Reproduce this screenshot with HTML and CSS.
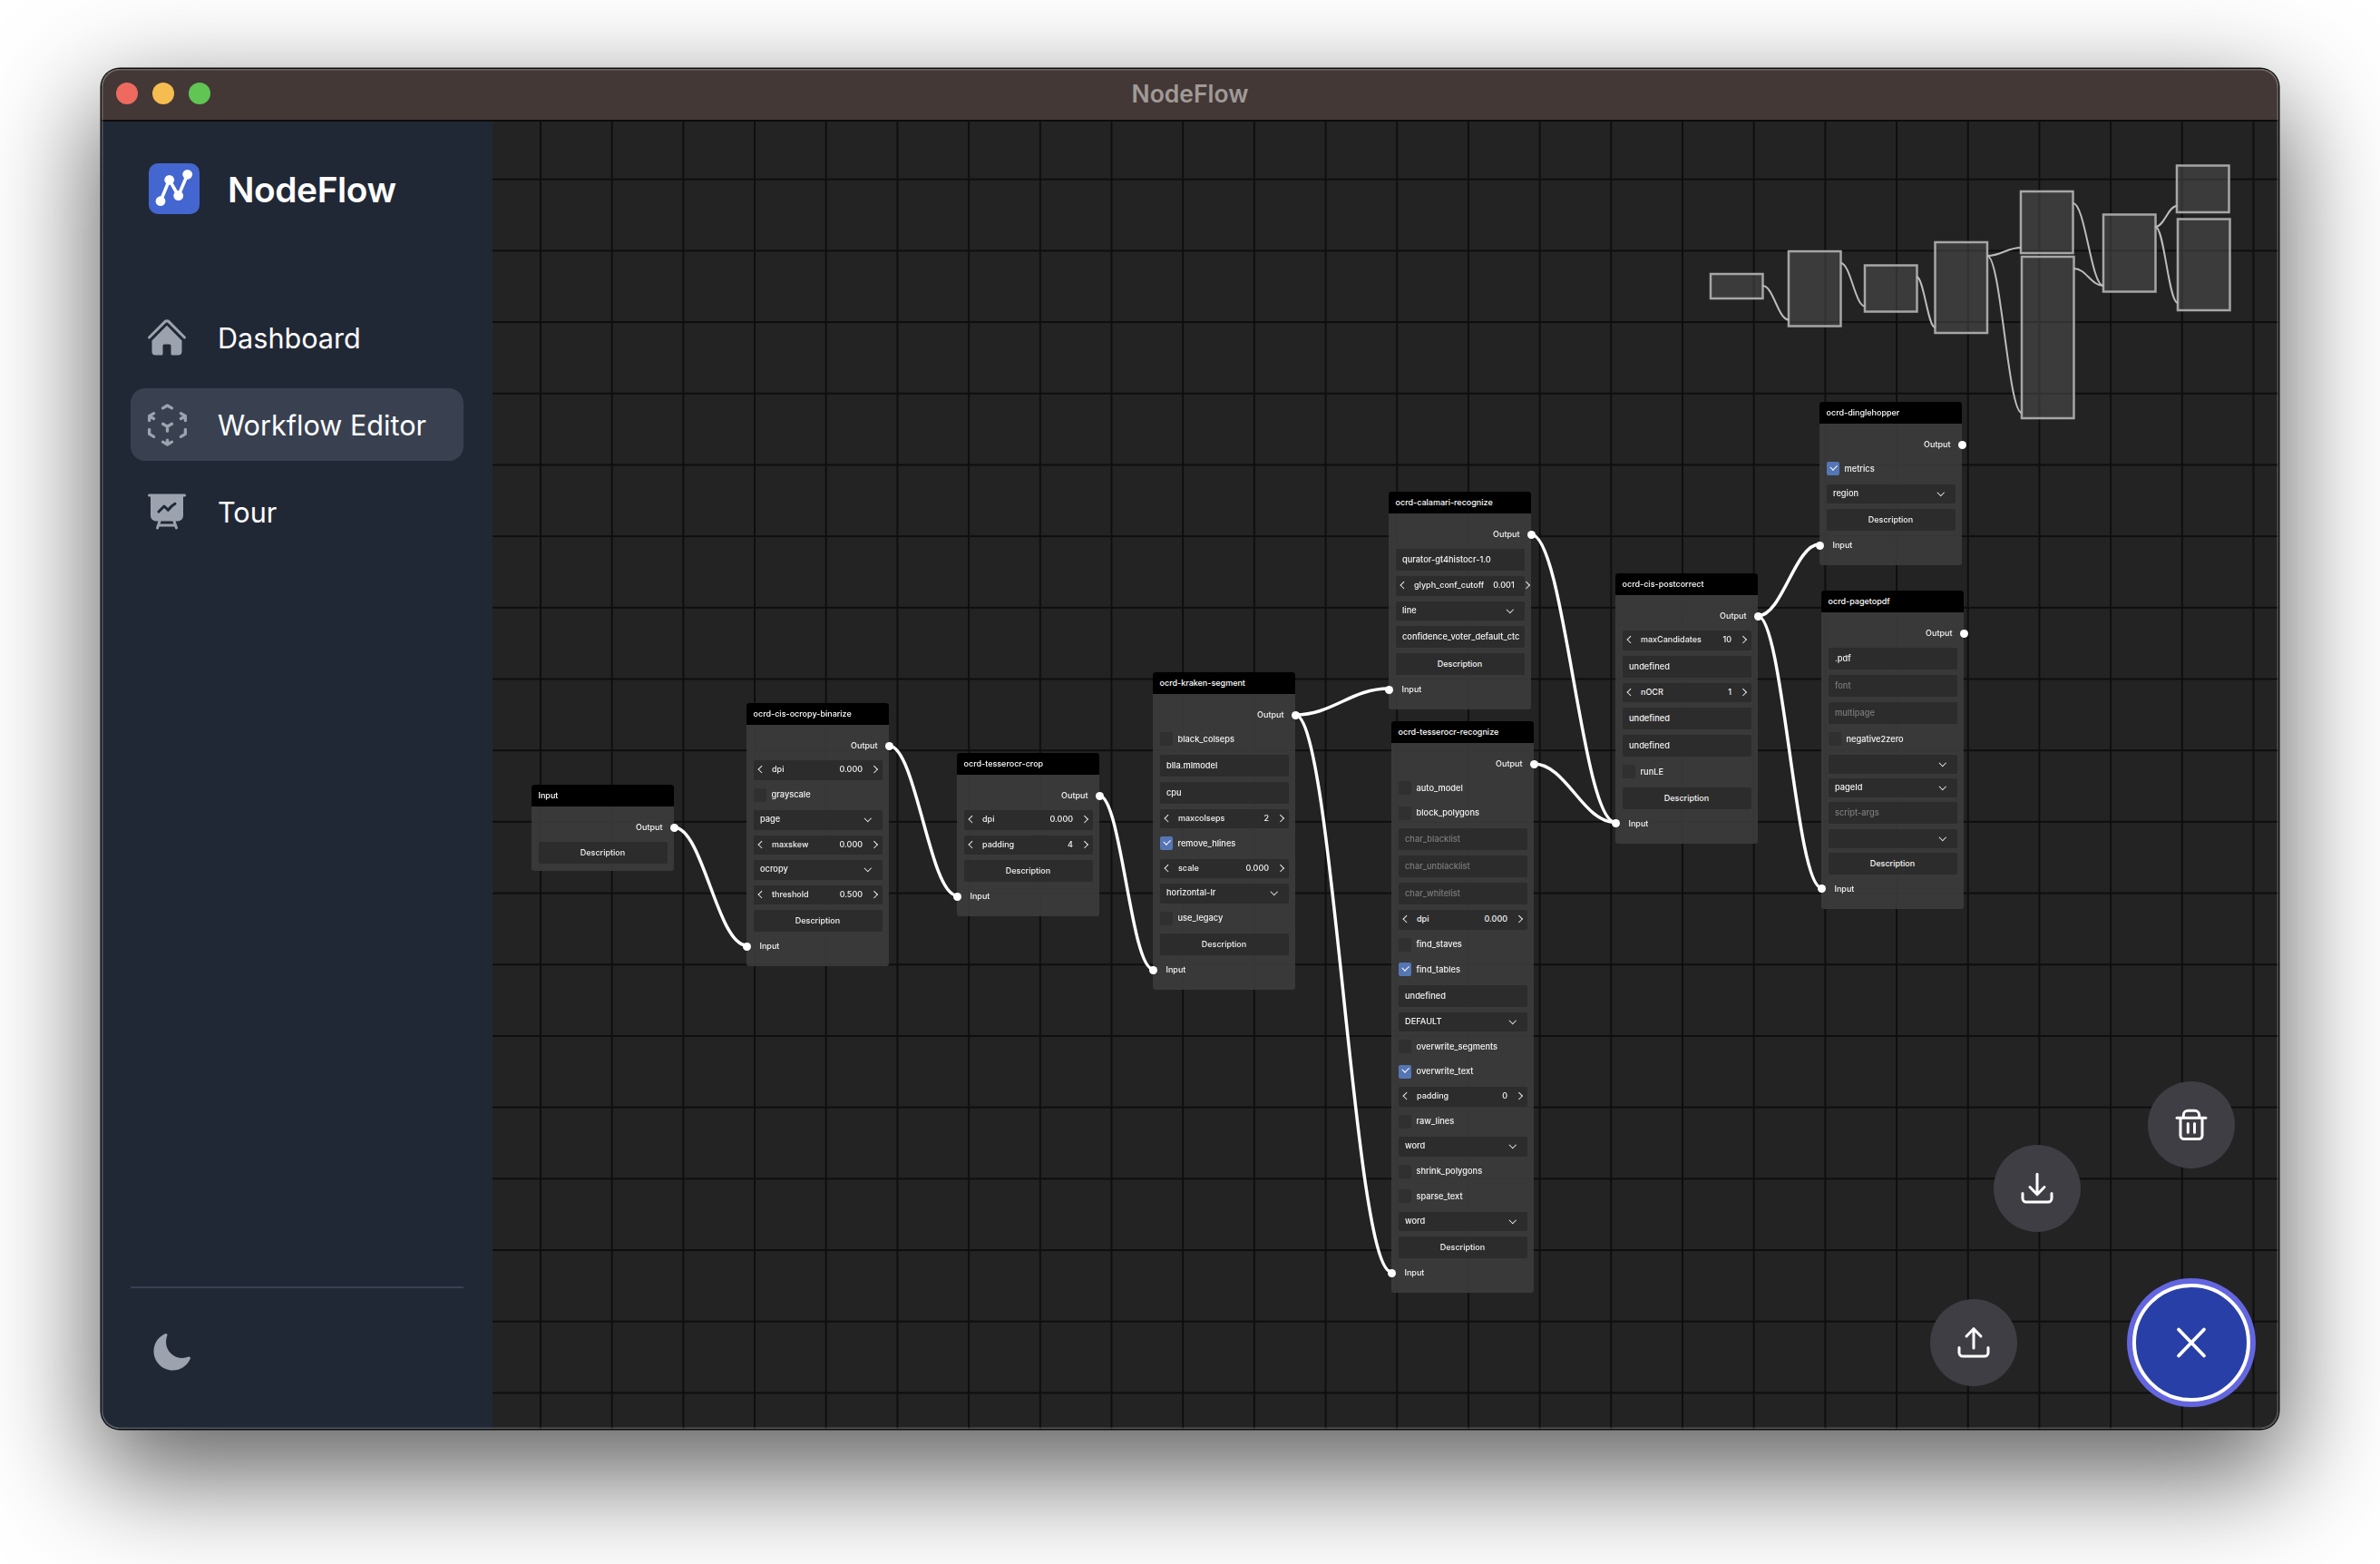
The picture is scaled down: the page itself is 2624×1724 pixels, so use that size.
FILE: index.html
```html
<!DOCTYPE html>
<html lang="en">
<head>
<meta charset="utf-8">
<title>NodeFlow</title>
<link rel="stylesheet" href="styles.css">
</head>
<body>
<div class="window">
  <header class="titlebar">
    <div class="lights"><i class="light red"></i><i class="light yellow"></i><i class="light green"></i></div>
    <div class="wintitle">NodeFlow</div>
    <div></div>
  </header>
  <div class="app">
    <aside class="sidebar">
      <div class="brand">
        <svg class="logo" viewBox="0 0 56 56"><rect width="56" height="56" rx="10" fill="#4366d0"/><polyline points="13,41.7 22.7,18.3 32.7,35.7 42.7,12.3" fill="none" stroke="#fff" stroke-width="3.6"/><circle cx="13" cy="41.7" r="5.4" fill="#fff"/><circle cx="22.7" cy="18.3" r="5.4" fill="#fff"/><circle cx="32.7" cy="35.7" r="5.4" fill="#fff"/><circle cx="42.7" cy="12.3" r="5.4" fill="#fff"/></svg>
        <span class="brandname">NodeFlow</span>
      </div>
      <nav class="nav">
        <a class="navitem">
          <svg class="navicon" viewBox="0 0 24 24" fill="#9ca3af"><path d="M11.47 3.841a.75.75 0 0 1 1.06 0l8.69 8.69a.75.75 0 1 0 1.06-1.061l-8.689-8.69a2.25 2.25 0 0 0-3.182 0l-8.69 8.69a.75.75 0 1 0 1.061 1.06l8.69-8.689Z"/><path d="m12 5.432 8.159 8.159c.03.03.06.058.091.086v6.198c0 1.035-.84 1.875-1.875 1.875H15a.75.75 0 0 1-.75-.75v-4.5a.75.75 0 0 0-.75-.75h-3a.75.75 0 0 0-.75.75V21a.75.75 0 0 1-.75.75H5.625a1.875 1.875 0 0 1-1.875-1.875v-6.198a2.29 2.29 0 0 0 .091-.086L12 5.432Z"/></svg>
          <span>Dashboard</span>
        </a>
        <a class="navitem active">
          <svg class="navicon" viewBox="0 0 24 24" fill="none" stroke="#9ca3af" stroke-width="1.5" stroke-linecap="round" stroke-linejoin="round"><path d="m21 7.5-2.25-1.313M21 7.5v2.25m0-2.25-2.25 1.313M3 7.5l2.25-1.313M3 7.5l2.25 1.313M3 7.5v2.25m9 3 2.25-1.313M12 12.75l-2.25-1.313M12 12.75V15m0 6.75 2.25-1.313M12 21.75V19.5m0 2.25-2.25-1.313m0-16.875L12 2.25l2.25 1.313M21 14.25v2.25l-2.25 1.313m-13.5 0L3 16.5v-2.25"/></svg>
          <span>Workflow Editor</span>
        </a>
        <a class="navitem">
          <svg class="navicon" viewBox="0 0 24 24" fill="#9ca3af"><path fill-rule="evenodd" clip-rule="evenodd" d="M2.25 2.25a.75.75 0 0 0 0 1.5H3v10.5a3 3 0 0 0 3 3h1.21l-1.172 3.513a.75.75 0 0 0 1.424.474l.329-.987h8.418l.33.987a.75.75 0 0 0 1.422-.474l-1.17-3.513H18a3 3 0 0 0 3-3V3.75h.75a.75.75 0 0 0 0-1.5H2.25Zm6.54 15h6.42l.5 1.5H8.29l.5-1.5Zm8.085-8.995a.75.75 0 1 0-.75-1.299 12.81 12.81 0 0 0-3.558 3.05L11.03 8.47a.75.75 0 0 0-1.06 0l-3 3a.75.75 0 1 0 1.06 1.06l2.47-2.47 1.617 1.618a.75.75 0 0 0 1.146-.102 11.312 11.312 0 0 1 3.612-3.321Z"/></svg>
          <span>Tour</span>
        </a>
      </nav>
      <div class="sidefoot">
        <svg class="navicon" viewBox="0 0 24 24" fill="#9ca3af"><path d="M9.528 1.718a.75.75 0 0 1 .162.819A8.97 8.97 0 0 0 9 6a9 9 0 0 0 9 9 8.97 8.97 0 0 0 3.463-.69.75.75 0 0 1 .981.98 10.503 10.503 0 0 1-9.694 6.46c-5.799 0-10.5-4.7-10.5-10.5 0-4.368 2.667-8.112 6.46-9.694a.75.75 0 0 1 .818.162Z"/></svg>
      </div>
    </aside>
    <main class="canvas">
      <div class="graph">
        <svg class="wires">
          <g transform="translate(-543 -134)">
            <path d="M743 912C775 912 791 1042 823 1042"/>
            <path d="M980 822C1010 822 1025 987 1055 987"/>
            <path d="M1212 877C1236 877 1247 1068 1271 1068"/>
            <path d="M1428 788C1469 788 1490 759 1531 759"/>
            <path d="M1428 788C1470 788 1492 1402 1534 1402"/>
            <path d="M1688 589C1725 589 1744 906.500 1781 906.500"/>
            <path d="M1691 842C1727 842 1745 906.500 1781 906.500"/>
            <path d="M1938 679C1965 679 1979 600 2006 600"/>
            <path d="M1938 679C1966 679 1980 978.500 2008 978.500"/>
          </g>
        </svg>

        <section class="node n-input src">
          <h3 class="ntitle">Input</h3>
          <div class="nbody">
            <div class="out">Output</div>
            <div class="desc">Description</div>
          </div>
        </section>

        <section class="node n-binarize">
          <h3 class="ntitle">ocrd-cis-ocropy-binarize</h3>
          <div class="nbody">
            <div class="out">Output</div>
            <div class="num"><span class="lbl">dpi</span><span class="val">0.000</span></div>
            <div class="chk">grayscale</div>
            <div class="sel"><span>page</span></div>
            <div class="num"><span class="lbl">maxskew</span><span class="val">0.000</span></div>
            <div class="sel"><span>ocropy</span></div>
            <div class="num"><span class="lbl">threshold</span><span class="val">0.500</span></div>
            <div class="desc">Description</div>
            <div class="in">Input</div>
          </div>
        </section>

        <section class="node n-crop">
          <h3 class="ntitle">ocrd-tesserocr-crop</h3>
          <div class="nbody">
            <div class="out">Output</div>
            <div class="num"><span class="lbl">dpi</span><span class="val">0.000</span></div>
            <div class="num"><span class="lbl">padding</span><span class="val">4</span></div>
            <div class="desc">Description</div>
            <div class="in">Input</div>
          </div>
        </section>

        <section class="node n-kraken">
          <h3 class="ntitle">ocrd-kraken-segment</h3>
          <div class="nbody">
            <div class="out">Output</div>
            <div class="chk">black_colseps</div>
            <div class="txt">blla.mlmodel</div>
            <div class="txt">cpu</div>
            <div class="num"><span class="lbl">maxcolseps</span><span class="val">2</span></div>
            <div class="chk on">remove_hlines</div>
            <div class="num"><span class="lbl">scale</span><span class="val">0.000</span></div>
            <div class="sel"><span>horizontal-lr</span></div>
            <div class="chk">use_legacy</div>
            <div class="desc">Description</div>
            <div class="in">Input</div>
          </div>
        </section>

        <section class="node n-calamari">
          <h3 class="ntitle">ocrd-calamari-recognize</h3>
          <div class="nbody">
            <div class="out">Output</div>
            <div class="txt">qurator-gt4histocr-1.0</div>
            <div class="num"><span class="lbl">glyph_conf_cutoff</span><span class="val">0.001</span></div>
            <div class="sel"><span>line</span></div>
            <div class="txt">confidence_voter_default_ctc</div>
            <div class="desc">Description</div>
            <div class="in">Input</div>
          </div>
        </section>

        <section class="node n-tesseract">
          <h3 class="ntitle">ocrd-tesserocr-recognize</h3>
          <div class="nbody">
            <div class="out">Output</div>
            <div class="chk">auto_model</div>
            <div class="chk">block_polygons</div>
            <div class="txt ph">char_blacklist</div>
            <div class="txt ph">char_unblacklist</div>
            <div class="txt ph">char_whitelist</div>
            <div class="num"><span class="lbl">dpi</span><span class="val">0.000</span></div>
            <div class="chk">find_staves</div>
            <div class="chk on">find_tables</div>
            <div class="txt">undefined</div>
            <div class="sel"><span>DEFAULT</span></div>
            <div class="chk">overwrite_segments</div>
            <div class="chk on">overwrite_text</div>
            <div class="num"><span class="lbl">padding</span><span class="val">0</span></div>
            <div class="chk">raw_lines</div>
            <div class="sel"><span>word</span></div>
            <div class="chk">shrink_polygons</div>
            <div class="chk">sparse_text</div>
            <div class="sel"><span>word</span></div>
            <div class="desc">Description</div>
            <div class="in">Input</div>
          </div>
        </section>

        <section class="node n-post">
          <h3 class="ntitle">ocrd-cis-postcorrect</h3>
          <div class="nbody">
            <div class="out">Output</div>
            <div class="num"><span class="lbl">maxCandidates</span><span class="val">10</span></div>
            <div class="txt">undefined</div>
            <div class="num"><span class="lbl">nOCR</span><span class="val">1</span></div>
            <div class="txt">undefined</div>
            <div class="txt">undefined</div>
            <div class="chk">runLE</div>
            <div class="desc">Description</div>
            <div class="in">Input</div>
          </div>
        </section>

        <section class="node n-dingle">
          <h3 class="ntitle">ocrd-dinglehopper</h3>
          <div class="nbody">
            <div class="out">Output</div>
            <div class="chk on">metrics</div>
            <div class="sel"><span>region</span></div>
            <div class="desc">Description</div>
            <div class="in">Input</div>
          </div>
        </section>

        <section class="node n-page tight">
          <h3 class="ntitle">ocrd-pagetopdf</h3>
          <div class="nbody">
            <div class="out">Output</div>
            <div class="txt">.pdf</div>
            <div class="txt ph">font</div>
            <div class="txt ph">multipage</div>
            <div class="chk">negative2zero</div>
            <div class="sel"></div>
            <div class="sel"><span>pageId</span></div>
            <div class="txt ph">script-args</div>
            <div class="sel"></div>
            <div class="desc">Description</div>
            <div class="in">Input</div>
          </div>
        </section>

        <svg class="minimap">
          <g transform="translate(-543 -134)">
            <rect x="1886" y="302" width="57.500" height="27"/>
            <rect x="1972" y="277" width="57.500" height="82.500"/>
            <rect x="2056" y="292.500" width="57.500" height="51"/>
            <rect x="2133.500" y="267" width="57.500" height="100"/>
            <rect x="2228" y="211" width="57.500" height="68"/>
            <rect x="2229" y="283" width="57.500" height="178"/>
            <rect x="2319" y="236.500" width="57.500" height="85"/>
            <rect x="2400" y="182.500" width="57.500" height="51.500"/>
            <rect x="2401" y="241.500" width="57.500" height="100.500"/>
            <path d="M1943.500 315C1955 315 1960.500 352.500 1972 352.500"/>
            <path d="M2029.500 290C2040 290 2045.500 337.500 2056 337.500"/>
            <path d="M2113 305C2121 305 2125.500 361 2133.500 361"/>
            <path d="M2191 282C2206 282 2213 273 2228 273"/>
            <path d="M2191 282C2206 282 2214 455 2229 455"/>
            <path d="M2285.500 224C2299 224 2305.500 315 2319 315"/>
            <path d="M2286.500 296C2300 296 2305.500 315 2319 315"/>
            <path d="M2376.500 250C2386 250 2390.500 227 2400 227"/>
            <path d="M2376.500 250C2386 250 2391 334 2401 334"/>
          </g>
        </svg>
      </div>

      <button class="fab fab-trash" aria-label="Delete">
        <svg viewBox="0 0 40 40"><path d="M4 12.300H36M8 12.300V31.500a4 4 0 0 0 4 4H28a4 4 0 0 0 4-4V12.300M11.300 12.300V9a5 5 0 0 1 5-4.700H23.700a5 5 0 0 1 5 4.700v3.300M16.300 18.500V28.300M23.500 18.500V28.300"/></svg>
      </button>
      <button class="fab fab-down" aria-label="Download">
        <svg viewBox="0 0 40 40"><path d="M20 4.300V26.500M12 18.500L20 26.700L28 18.500M4 25.500V31a4 4 0 0 0 4 4H32a4 4 0 0 0 4-4V25.500"/></svg>
      </button>
      <button class="fab fab-up" aria-label="Upload">
        <svg viewBox="0 0 40 40"><path d="M20 26V5M12 13L20 4.700L28 13M4 25.500V31a4 4 0 0 0 4 4H32a4 4 0 0 0 4-4V25.500"/></svg>
      </button>
      <button class="fab-main" aria-label="Close">
        <svg viewBox="0 0 40 40"><path d="M6 5.500L34 34.500M34 5.500L6 34.500"/></svg>
      </button>
    </main>
  </div>
</div>
</body>
</html>
```

FILE: styles.css
```css
* { box-sizing: border-box; }
html, body { margin: 0; height: 100%; }
body {
  width: 2624px;
  height: 1724px;
  padding: 76px 112px 149px;
  background: #fff;
  overflow: hidden;
  font-family: Inter, "Liberation Sans", sans-serif;
}
.window {
  position: relative;
  width: 2400px;
  height: 1499px;
  display: flex;
  flex-direction: column;
  border-radius: 20px;
  overflow: hidden;
  box-shadow: 0 0 0 1.500px #0c0c0c, 0 44px 120px 8px rgba(0, 0, 0, .62);
}
.window::after {
  content: "";
  position: absolute;
  inset: 0;
  border-radius: 20px;
  box-shadow: inset 0 0 0 1.500px rgba(255, 255, 255, .22);
  pointer-events: none;
}
.titlebar {
  flex: none;
  height: 58px;
  display: grid;
  grid-template-columns: 1fr auto 1fr;
  align-items: center;
  padding: 0 16px 2px;
  background: #433836;
  border-bottom: 2px solid #0c0c0c;
}
.lights { display: flex; gap: 16px; }
.light { width: 24px; height: 24px; border-radius: 50%; display: block; }
.red { background: #ee6a5f; }
.yellow { background: #f5bd4f; }
.green { background: #61c554; }
.wintitle { color: #a09a97; font-size: 26.500px; font-weight: 600; }
.app { flex: 1; display: flex; min-height: 0; }
.sidebar {
  flex: none;
  width: 431px;
  display: flex;
  flex-direction: column;
  padding: 46px 32px 56px 32px;
  background: #212835;
  color: #fff;
}
.brand { display: flex; align-items: center; gap: 31px; padding-left: 20px; height: 56px; }
.logo { width: 56px; height: 56px; flex: none; }
.brandname { font-size: 38.800px; font-weight: 600; letter-spacing: -.4px; }
.nav { margin-top: 96px; display: flex; flex-direction: column; gap: 16px; }
.navitem {
  height: 80px;
  display: flex;
  align-items: center;
  gap: 32px;
  padding-left: 16px;
  border-radius: 16px;
  font-size: 30.600px;
}
.navitem.active { background: #394150; }
.navicon { width: 48px; height: 48px; flex: none; }
.navitem.active .navicon { width: 53px; height: 53px; margin: 0 -2.500px; }
.sidefoot {
  margin-top: auto;
  padding: 47px 0 0 21px;
  border-top: 2px solid #374151;
}
.canvas {
  position: relative;
  flex: 1;
  min-width: 0;
  overflow: hidden;
  background-color: #232323;
  background-image:
    linear-gradient(#0e0e0e 2px, transparent 2px),
    linear-gradient(90deg, #0e0e0e 2px, transparent 2px);
  background-size: 78.7px 78.7px;
  background-position: 52px 62.7px;
}
.graph { position: absolute; inset: 0; filter: blur(.35px); }
.wires, .minimap { position: absolute; left: 0; top: 0; width: 100%; height: 100%; overflow: visible; }
.wires path { fill: none; stroke: #fff; stroke-width: 3.500px; }
.minimap { pointer-events: none; }
.minimap rect { fill: rgba(84, 84, 84, .5); stroke: #a6a6a6; stroke-width: 2.500px; }
.minimap path { fill: none; stroke: #bcbcbc; stroke-width: 2px; }

.node {
  position: absolute;
  width: 157px;
  border-radius: 3px;
  background: rgba(60, 60, 60, .9);
  color: #f4f4f4;
  font-size: 9px;
  font-weight: 500;
  line-height: 1;
}
.n-input { left: 43px; top: 731px; }
.n-binarize { left: 280px; top: 641px; }
.n-crop { left: 512px; top: 696px; }
.n-kraken { left: 728px; top: 607px; }
.n-calamari { left: 988px; top: 408px; }
.n-tesseract { left: 991px; top: 661px; }
.n-post { left: 1238px; top: 498px; }
.n-dingle { left: 1463px; top: 309px; }
.n-page { left: 1465px; top: 517px; }
.ntitle {
  margin: 0;
  height: 24px;
  line-height: 23px;
  padding-left: 7.500px;
  background: #000;
  border-radius: 3px 3px 0 0;
  color: #fff;
  font-size: 9px;
  font-weight: 500;
  white-space: nowrap;
}
.nbody { display: flex; flex-direction: column; padding: 12px 0 11px; }
.src .nbody { padding-bottom: 4px; }
.out, .in { position: relative; height: 22px; line-height: 22px; }
.out { text-align: right; padding-right: 12.500px; margin-bottom: 3px; }
.in { padding-left: 14.500px; margin-top: 1px; }
.out::after, .in::after {
  content: "";
  position: absolute;
  top: 6.500px;
  width: 9px;
  height: 9px;
  border-radius: 50%;
  background: #fff;
}
.out::after { right: -4.500px; }
.in::after { left: -4.500px; }
.txt, .desc, .num, .sel {
  margin: 2px 7.500px 4px;
  border-radius: 2px;
  background: #2c2c2c;
  white-space: nowrap;
}
.txt, .sel, .chk { font-size: 9.250px; }
.txt, .desc { height: 24px; line-height: 23.500px; }
.txt { padding: 0 7.500px; overflow: hidden; }
.ph { color: #7c7c7c; }
.desc { text-align: center; }
.num, .sel { height: 21.500px; display: flex; align-items: center; padding-bottom: 2px; }
.num { padding-left: 3.500px; padding-right: 3.500px; }
.num::before, .num::after, .sel::after {
  content: "";
  flex: none;
  width: 4.500px;
  height: 4.500px;
  border-style: solid;
  border-color: #f0f0f0;
  border-width: 0;
}
.num::before { border-left-width: 1.300px; border-bottom-width: 1.300px; transform: rotate(45deg); margin: 0 8.500px 0 3px; }
.num::after { border-right-width: 1.300px; border-top-width: 1.300px; transform: rotate(45deg); margin: 0 2.500px 0 10px; }
.sel { padding-left: 7.500px; padding-right: 7.500px; }
.sel::after { border-right-width: 1.300px; border-bottom-width: 1.300px; transform: rotate(45deg); margin: -2px 5.500px 0 auto; }
.lbl { flex: 1 0 auto; margin-right: 10px; }
.val { flex: none; }
.chk {
  position: relative;
  height: 27.500px;
  margin: 0 7.500px;
  padding-bottom: 2.500px;
  display: flex;
  align-items: center;
  gap: 5.500px;
}
.chk::before {
  content: "";
  flex: none;
  width: 14.500px;
  height: 15px;
  border-radius: 2px;
  background: #303030;
}
.chk.on::before { background: #5576b5; }
.chk.on::after {
  content: "";
  position: absolute;
  left: 4.500px;
  top: 7.700px;
  width: 6px;
  height: 3.500px;
  border-left: 1.300px solid #fff;
  border-bottom: 1.300px solid #fff;
  transform: rotate(-45deg);
}
.tight .sel { margin-bottom: 2.500px; }

.fab, .fab-main {
  position: absolute;
  padding: 0;
  border: 0;
  border-radius: 50%;
  display: flex;
  align-items: center;
  justify-content: center;
}
.fab { width: 96px; height: 96px; background: #3f3e45; }
.fab svg, .fab-main svg { width: 40px; height: 40px; fill: none; stroke: #fff; stroke-width: 3px; stroke-linecap: round; stroke-linejoin: round; }
.fab-trash { left: 1825px; top: 1058px; }
.fab-down { left: 1655px; top: 1128px; }
.fab-up { left: 1585px; top: 1298px; }
.fab-main {
  left: 1808px;
  top: 1281px;
  width: 130px;
  height: 130px;
  background: #283fa8;
  border: 4px solid #fff;
  box-shadow: 0 0 0 6px #6366e0;
}
.fab-main svg { width: 40px; height: 40px; stroke-width: 3.800px; }
```
